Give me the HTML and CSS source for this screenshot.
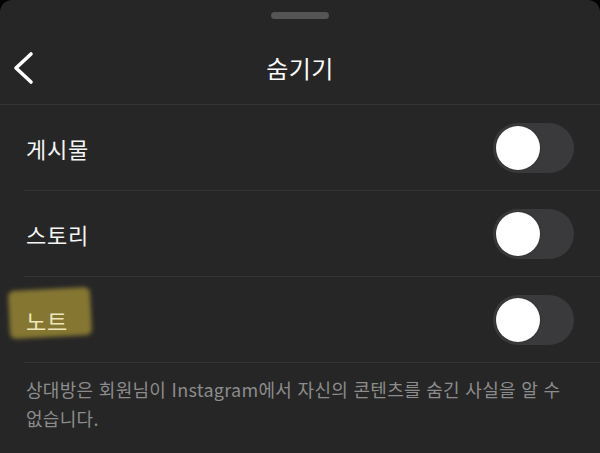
FILE: index.html
```html
<!doctype html>
<html lang="ko">
<head>
<meta charset="utf-8">
<title>숨기기</title>
<link rel="stylesheet" href="styles.css">
</head>
<body>
<div class="sheet">
	<div class="grab"><span class="handle"></span></div>
	<div class="header">
		<a href="javascript:;" class="back">
			<svg width="24" height="34" viewBox="0 0 24 34"><polyline points="19,3 4,17 19,31" fill="none" stroke="#fff" stroke-width="3.6" stroke-linecap="round" stroke-linejoin="round"/></svg>
		</a>
		<h1 class="title">숨기기</h1>
		<span></span>
	</div>
	<ul class="list">
		<li class="row">
			<span class="label">게시물</span>
			<span class="switch"><i></i></span>
		</li>
		<li class="row">
			<span class="label">스토리</span>
			<span class="switch"><i></i></span>
		</li>
		<li class="row">
			<span class="label marked"><em class="mark"></em><b>노트</b></span>
			<span class="switch"><i></i></span>
		</li>
	</ul>
	<p class="note">상대방은 회원님이 Instagram에서 자신의 콘텐츠를 숨긴 사실을 알 수 없습니다.</p>
</div>
</body>
</html>
```

FILE: styles.css
```css
*{ margin:0; padding:0; list-style:none; box-sizing:border-box;}
html,body{ background:#000; height:100%;}
body{ font-family:"Noto Sans CJK KR","Noto Sans",sans-serif; color:#f5f5f5; overflow:hidden;}

.sheet{ height:453px; background:#262626; border-radius:12px 12px 0 0;}

.grab{ height:34px; display:flex; justify-content:center; padding-top:12px;}
.handle{ width:58px; height:7px; border-radius:4px; background:#555;}

.header{ height:71px; display:grid; grid-template-columns:1fr auto 1fr; align-items:center; border-bottom:1px solid #333; padding:0 12px;}
.back{ display:flex; width:24px; height:34px; margin-top:-2px;}
.title{ font-size:24px; font-weight:400; letter-spacing:0.5px; color:#fafafa; margin-top:-4px;}

.list{ padding-left:24px;}
.row{ height:86px; display:flex; align-items:center; justify-content:space-between; border-bottom:1px solid #333; padding:0 26px 0 2px;}
.label{ font-size:22px; letter-spacing:0.8px; position:relative;}
.label b{ font-weight:400; position:relative;}
.marked{ color:#efe6bc;}
.mark{ position:absolute; left:-17px; top:-15px; width:82px; height:48px; background:#857632; border-radius:6px; transform:rotate(-3deg); filter:blur(2px);}

.switch{ width:81px; height:50px; border-radius:25px; background:#3a3a3c; padding:3px; display:flex;}
.switch i{ width:44px; height:44px; border-radius:50%; background:#fff; box-shadow:0 0 2px rgba(0,0,0,0.3);}

.note{ padding:12px 30px 0 26px; font-size:18px; letter-spacing:0.3px; line-height:29px; color:#8c8c8c;}
```
